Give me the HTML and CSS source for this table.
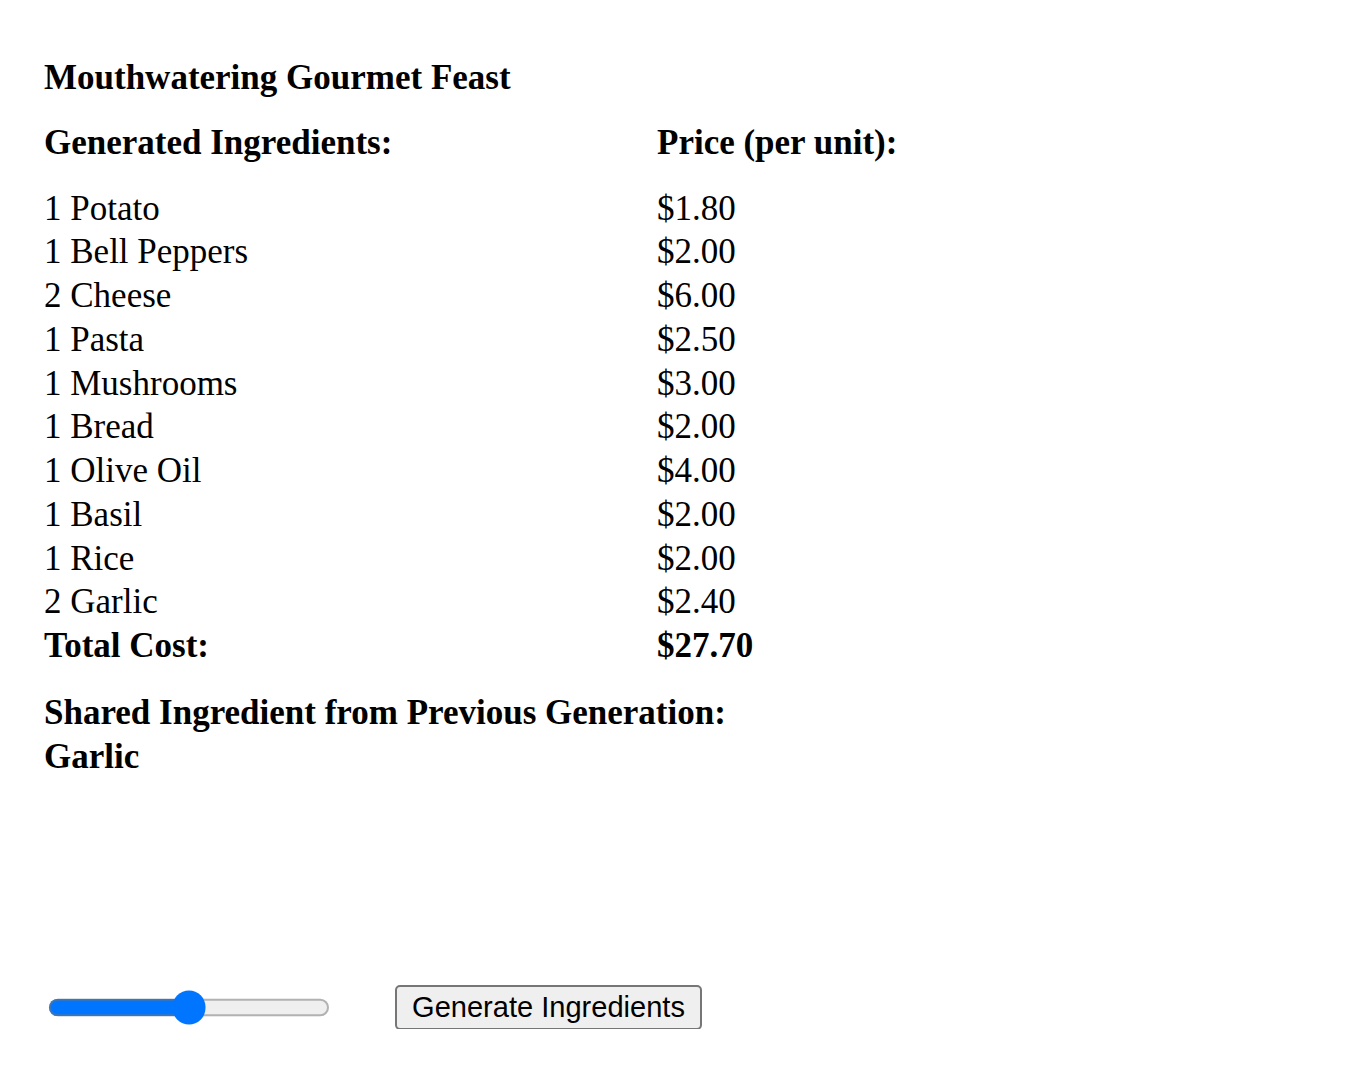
FILE: index.html
```html
<!DOCTYPE html>
<html>
<head>
<meta charset="utf-8">
<link rel="stylesheet" href="styles.css">
</head>
<body>
<main class="page">
  <div class="title bold">Mouthwatering Gourmet Feast</div>
  <div class="table">
    <div class="row head bold"><span>Generated Ingredients:</span><span>Price (per unit):</span></div>
    <div class="items">
      <div class="row"><span>1 Potato</span><span>$1.80</span></div>
      <div class="row"><span>1 Bell Peppers</span><span>$2.00</span></div>
      <div class="row"><span>2 Cheese</span><span>$6.00</span></div>
      <div class="row"><span>1 Pasta</span><span>$2.50</span></div>
      <div class="row"><span>1 Mushrooms</span><span>$3.00</span></div>
      <div class="row"><span>1 Bread</span><span>$2.00</span></div>
      <div class="row"><span>1 Olive Oil</span><span>$4.00</span></div>
      <div class="row"><span>1 Basil</span><span>$2.00</span></div>
      <div class="row"><span>1 Rice</span><span>$2.00</span></div>
      <div class="row"><span>2 Garlic</span><span>$2.40</span></div>
      <div class="row bold"><span>Total Cost:</span><span>$27.70</span></div>
    </div>
  </div>
  <div class="shared bold">
    <div>Shared Ingredient from Previous Generation:</div>
    <div>Garlic</div>
  </div>
  <div class="controls">
    <input class="slider" type="range" min="0" max="100" value="50">
    <button class="btn" type="button">Generate Ingredients</button>
  </div>
</main>
</body>
</html>
```

FILE: styles.css
```css
html, body {
  margin: 0;
  padding: 0;
  background: #ffffff;
}
.page {
  padding: 56px 0 0 44px;
  font-family: "Liberation Serif", "Times New Roman", serif;
  font-size: 35px;
  line-height: 43.75px;
  color: #000;
}
.bold {
  font-weight: bold;
}
.title {
  margin-bottom: 21.5px;
}
.row {
  display: grid;
  grid-template-columns: 613px auto;
}
.head {
  margin-bottom: 21.5px;
}
.shared {
  margin-top: 23px;
}
.controls {
  display: flex;
  align-items: center;
  margin-top: 207px;
  height: 44px;
}
.slider {
  zoom: 2.18;
  margin: 2px;
}
.btn {
  zoom: 2.18;
  margin: 0 0 0 28px;
  font-family: "Liberation Sans", Arial, sans-serif;
}
```
